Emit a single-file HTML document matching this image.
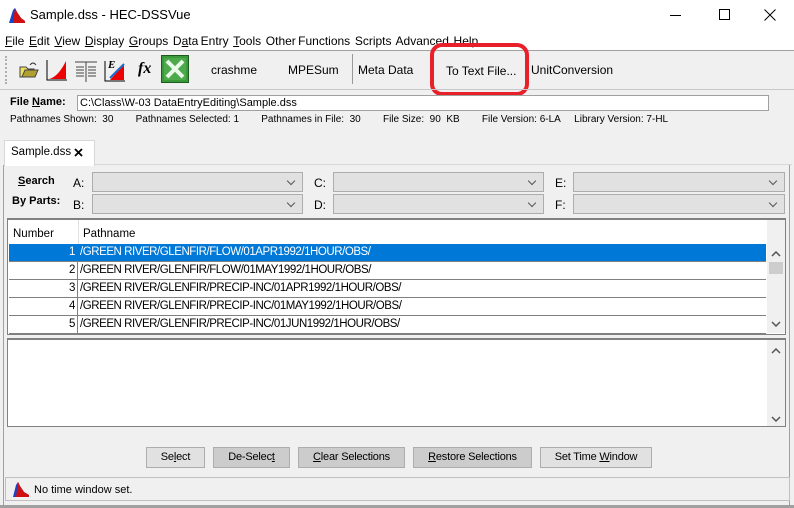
<!DOCTYPE html>
<html><head><style>
*{box-sizing:border-box;margin:0;padding:0}
body{width:794px;height:508px;background:#f0f0f0;font-family:"Liberation Sans",sans-serif;font-size:11px;color:#000;position:relative;overflow:hidden}
.a{position:absolute}
.u{text-decoration:underline}
.combo{position:absolute;height:20px;background:#e1e1e1;border:1px solid #adadad}
.combo:after{content:"";position:absolute;right:8px;top:5px;width:5px;height:5px;border-right:1px solid #555;border-bottom:1px solid #555;transform:rotate(45deg)}
.btn{position:absolute;top:447px;height:21px;background:#e1e1e1;border:1px solid #adadad;text-align:center;line-height:19px;font-size:11px;letter-spacing:-0.2px}
.row{position:absolute;left:1px;width:757px;height:18px;border-bottom:1px solid #808080;font-size:11.5px;line-height:17px;background:#fff;letter-spacing:-0.45px}
.row .n{position:absolute;left:0;width:69px;text-align:right;padding-right:2px;border-right:1px solid #808080;height:17px}
.row .p{position:absolute;left:71px}
</style></head><body>
<div class="a" style="left:0;top:0;width:794px;height:50px;background:#fff"></div>
<svg class="a" style="left:8px;top:6px" width="18" height="18"><path d="M1 17 L5 4 L7 2 L9 6 L13 12 L17 15 L17 17Z" fill="#1a44c8"/><path d="M5 17 L7 2 L9 6 L13 12 L17 15 L17 17Z" fill="#d01010"/></svg>
<div class="a" style="left:30px;top:7px;font-size:13px">Sample.dss - HEC-DSSVue</div>
<div class="a" style="left:670px;top:15px;width:11px;height:1px;background:#000"></div>
<div class="a" style="left:719px;top:9px;width:11px;height:11px;border:1px solid #000"></div>
<svg class="a" style="left:764px;top:9px" width="12" height="12"><path d="M0.5 0.5l11 11M11.5 0.5l-11 11" stroke="#000"/></svg>
<div class="a" style="left:5px;top:34px;font-size:12px;white-space:nowrap;word-spacing:-1px">
<span class="u">F</span>ile&nbsp; <span class="u">E</span>dit&nbsp; <span class="u">V</span>iew&nbsp; <span class="u">D</span>isplay&nbsp; <span class="u">G</span>roups&nbsp; D<span class="u">a</span>ta Entry&nbsp; <span class="u">T</span>ools&nbsp; Other Functions&nbsp; Scripts&nbsp; Advanced&nbsp; Help</div>
<div class="a" style="left:0;top:50px;width:794px;height:1px;background:#a0a0a0"></div>
<div class="a" style="left:5px;top:56px;width:2px;height:28px;border-left:2px dotted #b0b0b0"></div>
<svg class="a" style="left:19px;top:60px" width="20" height="18"><path d="M1 7h6l2 2h6v8H1z" fill="#f0e060" stroke="#444"/><path d="M3 17l3-7h13l-3 7z" fill="#b0a030" stroke="#444"/><path d="M11 5q3-4 6 0" fill="none" stroke="#333"/></svg>
<svg class="a" style="left:46px;top:59px" width="22" height="22"><path d="M1 1v20h20" fill="none" stroke="#000"/><path d="M3 20 Q12 18 20 2 V20Z" fill="#e00"/></svg>
<svg class="a" style="left:74px;top:60px" width="24" height="22"><g stroke="#444"><path d="M1 2h22M12 2v20M2 7h8M2 10h8M2 13h8M2 16h8M14 7h8M14 10h8M14 13h8M14 16h8"/></g></svg>
<svg class="a" style="left:104px;top:58px" width="22" height="24"><path d="M1 3v20h20" fill="none" stroke="#000"/><path d="M6 22 L20 6 V22Z" fill="#e00"/><path d="M6 20 L20 6" stroke="#1a6fd0" stroke-width="2"/><text x="4" y="10" font-family="Liberation Serif" font-style="italic" font-weight="bold" font-size="11">E</text></svg>
<div class="a" style="left:138px;top:60px;font-family:'Liberation Serif';font-style:italic;font-weight:bold;font-size:16px">fx</div>
<svg class="a" style="left:161px;top:55px" width="28" height="28"><rect x="0.5" y="0.5" width="27" height="27" fill="#3a9a3a" stroke="#1d5a1d"/><rect x="3" y="3" width="22" height="22" fill="#4caa4c"/><path d="M6 6l16 16M22 6L6 22" stroke="#eaf8ea" stroke-width="4"/></svg>
<div class="a" style="left:211px;top:63px;font-size:12px">crashme</div>
<div class="a" style="left:288px;top:63px;font-size:12px">MPESum</div>
<div class="a" style="left:352px;top:54px;width:1px;height:30px;background:#999"></div>
<div class="a" style="left:358px;top:63px;font-size:12px">Meta Data</div>
<div class="a" style="left:446px;top:64px;font-size:12px">To Text File...</div>
<div class="a" style="left:531px;top:63px;font-size:12px">UnitConversion</div>
<div class="a" style="left:430px;top:43px;width:99px;height:53px;border:4px solid #e8202a;border-radius:12px"></div>
<div class="a" style="left:0;top:89px;width:794px;height:1px;background:#c8c8c8"></div>
<div class="a" style="left:10px;top:96px;font-weight:bold">File <span class="u">N</span>ame:</div>
<div class="a" style="left:77px;top:95px;width:692px;height:16px;background:#fff;border:1px solid #a0a0a0;padding-left:2px;line-height:14px">C:\Class\W-03 DataEntryEditing\Sample.dss</div>
<div class="a" style="left:10px;top:114px;font-size:10px;white-space:pre">Pathnames Shown:  30        Pathnames Selected: 1        Pathnames in File:  30        File Size:  90  KB        File Version: 6-LA     Library Version: 7-HL</div>
<div class="a" style="left:4px;top:164px;width:788px;height:1px;background:#d8d8d8"></div>
<div class="a" style="left:4px;top:140px;width:91px;height:26px;background:#fff;border:1px solid #d8d8d8;border-bottom:none"></div>
<div class="a" style="left:11px;top:146px;font-size:11.5px">Sample.dss</div>
<svg class="a" style="left:74px;top:148px" width="9" height="9"><path d="M1 1l7 7M8 1L1 8" stroke="#000" stroke-width="1.8"/></svg>
<div class="a" style="left:3px;top:165px;width:1px;height:340px;background:#a0a0a0"></div>
<div class="a" style="left:789px;top:165px;width:1px;height:340px;background:#a0a0a0"></div>
<div class="a" style="left:18px;top:175px;font-weight:bold;font-size:11px"><span class="u">S</span>earch</div>
<div class="a" style="left:12px;top:195px;font-weight:bold;font-size:11px">By Parts:</div>
<div class="a" style="left:73px;top:176px;font-size:12px">A:</div><div class="a" style="left:73px;top:198px;font-size:12px">B:</div>
<div class="a" style="left:314px;top:176px;font-size:12px">C:</div><div class="a" style="left:314px;top:198px;font-size:12px">D:</div>
<div class="a" style="left:555px;top:176px;font-size:12px">E:</div><div class="a" style="left:555px;top:198px;font-size:12px">F:</div>
<div class="combo" style="left:92px;top:172px;width:211px"></div>
<div class="combo" style="left:92px;top:194px;width:211px"></div>
<div class="combo" style="left:333px;top:172px;width:211px"></div>
<div class="combo" style="left:333px;top:194px;width:211px"></div>
<div class="combo" style="left:573px;top:172px;width:212px"></div>
<div class="combo" style="left:573px;top:194px;width:212px"></div>
<div class="a" style="left:7px;top:218px;width:779px;height:117px;background:#fff;border:1px solid #808080;border-top:2px solid #808080">
 <div class="a" style="left:70px;top:0;width:1px;height:24px;background:#e0e0e0"></div>
 <div class="a" style="left:5px;top:8px;font-size:11.5px">Number</div>
 <div class="a" style="left:75px;top:8px;font-size:11.5px">Pathname</div>
 <div class="row" style="top:24px;background:#0078d7;color:#fff"><span class="n" style="border-color:#0078d7">1</span><span class="p">/GREEN RIVER/GLENFIR/FLOW/01APR1992/1HOUR/OBS/</span></div>
 <div class="row" style="top:42px"><span class="n">2</span><span class="p">/GREEN RIVER/GLENFIR/FLOW/01MAY1992/1HOUR/OBS/</span></div>
 <div class="row" style="top:60px"><span class="n">3</span><span class="p">/GREEN RIVER/GLENFIR/PRECIP-INC/01APR1992/1HOUR/OBS/</span></div>
 <div class="row" style="top:78px"><span class="n">4</span><span class="p">/GREEN RIVER/GLENFIR/PRECIP-INC/01MAY1992/1HOUR/OBS/</span></div>
 <div class="row" style="top:96px"><span class="n">5</span><span class="p">/GREEN RIVER/GLENFIR/PRECIP-INC/01JUN1992/1HOUR/OBS/</span></div>
 <div class="a" style="left:759px;top:0;width:18px;height:113px;background:#f0f0f0"></div>
 <div class="a" style="left:761px;top:42px;width:14px;height:12px;background:#cdcdcd"></div>
 <svg class="a" style="left:763px;top:31px" width="10" height="6"><path d="M1 5l4-4 4 4" fill="none" stroke="#555" stroke-width="1.5"/></svg>
 <svg class="a" style="left:763px;top:101px" width="10" height="6"><path d="M1 1l4 4 4-4" fill="none" stroke="#555" stroke-width="1.5"/></svg>
</div>
<div class="a" style="left:7px;top:338px;width:779px;height:89px;background:#fff;border:1px solid #808080;border-top:2px solid #808080">
 <div class="a" style="left:759px;top:0;width:18px;height:86px;background:#f0f0f0"></div>
 <svg class="a" style="left:763px;top:8px" width="10" height="6"><path d="M1 5l4-4 4 4" fill="none" stroke="#555" stroke-width="1.5"/></svg>
 <svg class="a" style="left:763px;top:76px" width="10" height="6"><path d="M1 1l4 4 4-4" fill="none" stroke="#555" stroke-width="1.5"/></svg>
</div>
<div class="btn" style="left:146px;width:59px">Se<span class="u">l</span>ect</div>
<div class="btn" style="left:213px;width:77px;background:#ccc">De-Selec<span class="u">t</span></div>
<div class="btn" style="left:298px;width:107px;background:#ccc"><span class="u">C</span>lear Selections</div>
<div class="btn" style="left:413px;width:119px;background:#ccc"><span class="u">R</span>estore Selections</div>
<div class="btn" style="left:540px;width:112px">Set Time <span class="u">W</span>indow</div>
<div class="a" style="left:5px;top:477px;width:785px;height:24px;border:1px solid #c0c0c0"></div>
<svg class="a" style="left:12px;top:481px" width="18" height="17"><path d="M1 16 L4 4 L6 1 L8 5 L12 11 L17 14 L17 16Z" fill="#1a44c8"/><path d="M4 16 L6 1 L8 5 L12 11 L17 14 L17 16Z" fill="#d01010"/></svg>
<div class="a" style="left:34px;top:484px">No time window set.</div>
<div class="a" style="left:0;top:505px;width:794px;height:3px;background:#a0a0a0"></div>
</body></html>
